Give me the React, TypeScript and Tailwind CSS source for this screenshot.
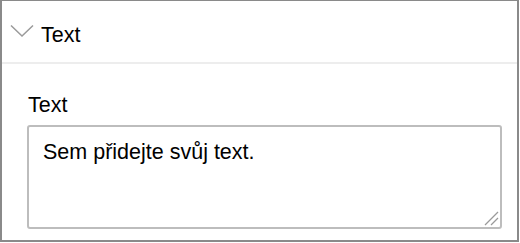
import React from "react";

export default function App() {
  return (
    <div className="w-[520px] h-[243px] bg-white font-['Liberation_Sans',Arial,sans-serif] text-black">
      <div className="w-[519px] h-[242px] border-x-2 border-b-2 border-t border-[#8a8a8a] flex flex-col">
        {/* Section header */}
        <div className="h-[63px] flex items-start pl-[8px] gap-[7px] border-b-2 border-[#ededed]">
          <svg width="24" height="14" viewBox="0 0 24 14" className="mt-[23px] shrink-0">
            <path d="M1 1.5 L12 12 L23 1.5" fill="none" stroke="#9a9a9a" strokeWidth="1.5" />
          </svg>
          <span className="mt-[22px] text-[21.5px] leading-[25px]">Text</span>
        </div>

        {/* Body */}
        <div className="flex flex-col pt-[29px] pl-[25px]">
          <label className="pl-px text-[21.5px] leading-[25px]">Text</label>
          <div className="relative mt-[7px] w-[475px] h-[104px] border-2 border-[#bdbdbd] rounded-[3px] pt-[13px] pl-[14px] text-[21.5px] leading-[25px]">
            Sem přidejte svůj text.
            <svg width="16" height="16" viewBox="0 0 16 16" className="absolute right-[1px] bottom-[1px]">
              <path d="M2 15 L15 2" stroke="#9a9a9a" strokeWidth="1.3" />
              <path d="M8 15 L15 8" stroke="#9a9a9a" strokeWidth="1.3" />
            </svg>
          </div>
        </div>
      </div>
    </div>
  );
}
